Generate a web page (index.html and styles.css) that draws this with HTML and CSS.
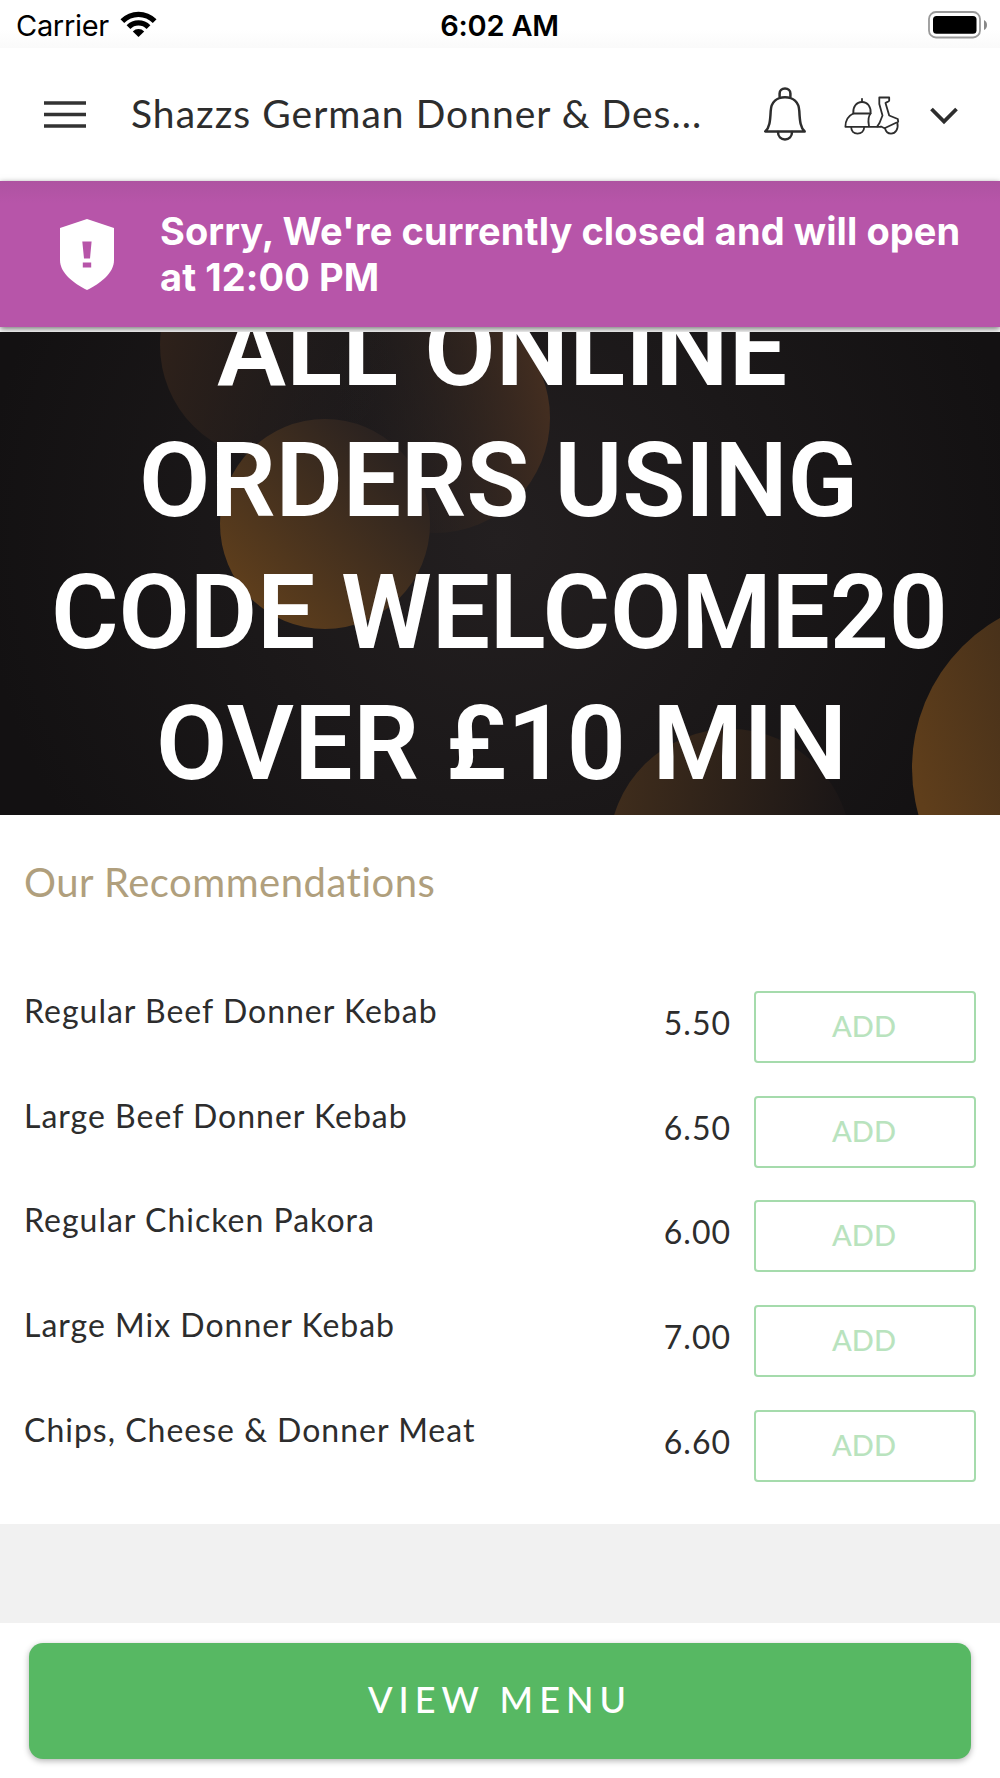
FILE: index.html
```html
<!DOCTYPE html>
<html lang="en">
<head>
  <meta charset="UTF-8">
  <title>Shazzs German Donner &amp; Desserts</title>
  <link rel="stylesheet" href="styles.css">
</head>
<body>
  <div class="status-bar">
    <div class="carrier">
      <span class="carrier-name">Carrier</span>
      <svg width="38" height="28" viewBox="0 0 38 28">
        <path d="M0.5 9.2 A25.5 25.5 0 0 1 36.5 9.2 L32.8 13 A20 20 0 0 0 4.2 13 Z"/>
        <path d="M6.6 15.2 A16.8 16.8 0 0 1 30.4 15.2 L26.6 19 A11.4 11.4 0 0 0 10.4 19 Z"/>
        <path d="M12.8 21.4 A8.2 8.2 0 0 1 24.2 21.4 L18.5 27 Z"/>
      </svg>
    </div>
    <span class="time">6:02 AM</span>
    <svg class="battery" width="59" height="28" viewBox="0 0 59 28">
      <rect x="1" y="1" width="51" height="25.5" rx="7" fill="none" stroke="#999" stroke-width="1.8"/>
      <rect x="5" y="5" width="43.5" height="17.8" rx="3.5"/>
      <path d="M56 9 Q59 10.5 59 14 Q59 17.5 56 19 Z" fill="#888"/>
    </svg>
  </div>

  <header class="header">
    <svg class="menu-icon" width="44" height="28" viewBox="0 0 44 28">
      <path d="M1 2h42M1 13.5h42M1 25h42" stroke="#333" stroke-width="3.4"/>
    </svg>
    <h1 class="title">Shazzs German Donner &amp; Des...</h1>
    <svg class="bell-icon" width="42" height="54" viewBox="0 0 42 54" fill="none" stroke="#2d2d2d" stroke-width="2.5" stroke-linecap="round" stroke-linejoin="round">
      <path d="M15.6 9.5V6.5C15.6 3.5 17.8 1.6 21 1.6S26.4 3.5 26.4 6.5V9.5"/>
      <path d="M1.3 44.5H40.7C36.5 40.5 35.8 34.5 35.3 24C34.8 15 29 10.3 21 10.3S7.2 15 6.7 24C6.2 34.5 5.5 40.5 1.3 44.5Z"/>
      <path d="M14 45C14 49.5 17 52.4 21 52.4S28 49.5 28 45"/>
    </svg>
    <svg class="scooter-icon" width="56" height="40" viewBox="0 0 56 40" fill="none" stroke="#2d2d2d" stroke-width="1.8" stroke-linecap="round" stroke-linejoin="round">
      <path d="M18 6V2.8"/>
      <path d="M9.3 17.5C8.8 11 12.3 6 18 6S27.2 11 26.6 17.5Z"/>
      <path d="M9.3 17.5C4.5 19.7 1.4 24 1.4 30.8H36.5"/>
      <path d="M26.6 17.5C23.2 21.5 24.3 26 25 30"/>
      <path d="M7.2 31C7.2 35 9.7 37.6 13.5 37.6S20.2 35 20.2 31"/>
      <path d="M33.2 30.5L35.5 27L38.5 19.5L35.3 8V1.5H45.2V4.5C45.2 6 42.5 5.5 41.5 7L45.2 19.5L53.8 23L54.2 25.8L40.5 32.3L37 30.5"/>
      <path d="M41 32.3C41.8 35.8 44 37.6 47 37.6C51.5 37.6 54.8 33 53.3 26.8"/>
    </svg>
    <svg class="chevron-icon" width="28" height="18" viewBox="0 0 28 18">
      <path d="M1.5 2L14 14.5L26.5 2" fill="none" stroke="#2d2d2d" stroke-width="3.8"/>
    </svg>
  </header>

  <div class="notice">
    <svg class="shield-icon" width="54" height="71" viewBox="0 0 54 71">
      <path d="M27 0L54 9V41C54 54 41 64 27 71C13 64 0 54 0 41V9Z" fill="#fff"/>
      <path d="M22.3 22.5H31.6L30 39.5H24ZM22.8 43.5H31.2V48.5H22.8Z" fill="#b755a9"/>
    </svg>
    <p class="notice-text">Sorry, We're currently closed and will open<br>at 12:00 PM</p>
  </div>

  <svg class="promo" width="1000" height="483" viewBox="0 332 1000 483">
    <defs>
      <radialGradient id="bg" gradientUnits="userSpaceOnUse" cx="500" cy="540" r="520">
        <stop offset="0" stop-color="#231f20"/>
        <stop offset="1" stop-color="#131112"/>
      </radialGradient>
      <linearGradient id="left" x1="0" y1="0.5" x2="1" y2="0.7">
        <stop offset="0" stop-color="#2e211a"/>
        <stop offset="1" stop-color="#231f20" stop-opacity="0"/>
      </linearGradient>
      <linearGradient id="middle" x1="0" y1="0.6" x2="1" y2="0.4">
        <stop offset="0.1" stop-color="#231f20" stop-opacity="0"/>
        <stop offset="1" stop-color="#442e20"/>
      </linearGradient>
      <linearGradient id="bright" x1="0.1" y1="0.8" x2="0.8" y2="0.1">
        <stop offset="0" stop-color="#5e3e1c"/>
        <stop offset="1" stop-color="#2a2220"/>
      </linearGradient>
      <linearGradient id="right" x1="0" y1="0.5" x2="1" y2="0.2">
        <stop offset="0" stop-color="#5f3e1b"/>
        <stop offset="0.8" stop-color="#2b2119"/>
      </linearGradient>
      <linearGradient id="bottom" x1="0" y1="0.3" x2="1" y2="0.4">
        <stop offset="0" stop-color="#402d1c"/>
        <stop offset="1" stop-color="#191516"/>
      </linearGradient>
    </defs>
    <rect y="332" width="1000" height="483" fill="url(#bg)"/>
    <circle cx="275" cy="345" r="115" fill="url(#left)"/>
    <circle cx="435" cy="418" r="115" fill="url(#middle)"/>
    <circle cx="325" cy="524" r="105" fill="url(#bright)"/>
    <circle cx="1084" cy="768" r="172" fill="url(#right)"/>
    <circle cx="730" cy="850" r="121" fill="url(#bottom)"/>
    <g class="promo-text">
      <text x="217" y="385" textLength="570">ALL ONLINE</text>
      <text x="139" y="516" textLength="719">ORDERS USING</text>
      <text x="51" y="647.5" textLength="897">CODE WELCOME20</text>
      <text x="156" y="779" textLength="691">OVER £10 MIN</text>
    </g>
  </svg>

  <section class="recommendations">
    <h2 class="section-title">Our Recommendations</h2>
    <div class="item">
      <span class="name">Regular Beef Donner Kebab</span>
      <span class="price">5.50</span>
      <button class="add">ADD</button>
    </div>
    <div class="item">
      <span class="name">Large Beef Donner Kebab</span>
      <span class="price">6.50</span>
      <button class="add">ADD</button>
    </div>
    <div class="item">
      <span class="name">Regular Chicken Pakora</span>
      <span class="price">6.00</span>
      <button class="add">ADD</button>
    </div>
    <div class="item">
      <span class="name">Large Mix Donner Kebab</span>
      <span class="price">7.00</span>
      <button class="add">ADD</button>
    </div>
    <div class="item">
      <span class="name">Chips, Cheese &amp; Donner Meat</span>
      <span class="price">6.60</span>
      <button class="add">ADD</button>
    </div>
  </section>

  <div class="spacer"></div>

  <footer class="footer">
    <button class="view-menu">VIEW MENU</button>
  </footer>
</body>
</html>
```
FILE: styles.css
```css
* {
  box-sizing: border-box;
}

body {
  margin: 0;
  width: 1000px;
  height: 1778px;
  display: flex;
  flex-direction: column;
  background: #fff;
  color: #2d2d2d;
  font-family: Lato, sans-serif;
  font-variant-ligatures: none;
  overflow: hidden;
}

svg {
  display: block;
  flex-shrink: 0;
}

/* status bar */
.status-bar {
  display: grid;
  grid-template-columns: 1fr auto 1fr;
  align-items: start;
  height: 48px;
  padding: 10px 13px 0 16px;
  background: linear-gradient(#fff 30px, #fafafa);
  color: #000;
  font-family: Inter, sans-serif;
  font-size: 29px;
  line-height: 31px;
}

.carrier {
  display: flex;
  gap: 11px;
}

.carrier-name {
  letter-spacing: -0.3px;
}

.time {
  margin-right: 4px;
  font-weight: 600;
  letter-spacing: -0.2px;
}

.battery {
  justify-self: end;
  margin-top: 1px;
}

/* header */
.header {
  display: flex;
  align-items: center;
  height: 133px;
  padding: 0 42px 0 43px;
  background: #fff;
}

.title {
  flex: 1;
  margin: -4px 0 0 44px;
  font-size: 39px;
  font-weight: 400;
  line-height: 46px;
  letter-spacing: 1.02px;
  white-space: nowrap;
}

.bell-icon {
  margin-top: -2px;
}

.scooter-icon {
  margin: 2px 0 0 38px;
}

.chevron-icon {
  margin: 2px 0 0 30px;
}

/* closed notice */
.notice {
  display: flex;
  height: 146px;
  padding: 0 0 0 60px;
  background: linear-gradient(#ae53a1, #b755a9 22px);
  box-shadow: 0 2px 6px rgba(0, 0, 0, 0.55);
  margin-bottom: 5px;
  color: #fff;
}

.shield-icon {
  margin-top: 38px;
}

.notice-text {
  margin: 27px 0 0 46px;
  font-family: Inter, sans-serif;
  font-size: 38px;
  font-weight: 700;
  line-height: 46px;
  letter-spacing: 0.08px;
  white-space: nowrap;
}

/* promo picture */
.promo {
  position: relative;
}

.promo-text {
  fill: #fff;
  font-family: Roboto, sans-serif;
  font-size: 103.5px;
  font-weight: 600;
}

/* recommendations */
.recommendations {
  height: 709px;
  padding: 42px 24px 0 24px;
}

.section-title {
  margin: 0 0 84px;
  color: #b09f7d;
  font-size: 40px;
  font-weight: 400;
  line-height: 50px;
  letter-spacing: 0.5px;
}

.item {
  display: flex;
  align-items: flex-start;
  height: 104.7px;
}

.name {
  flex: 1;
  font-size: 32px;
  line-height: 40px;
  letter-spacing: 1px;
}

.price {
  margin: 12px 23px 0 0;
  font-size: 32px;
  line-height: 40px;
  letter-spacing: 1px;
}

.add {
  width: 222px;
  height: 72px;
  padding: 0 2px 3px 0;
  border: 2px solid #a5dbac;
  border-radius: 4px;
  background: #fff;
  color: #b9e3be;
  font-family: Lato, sans-serif;
  font-size: 29px;
  font-weight: 500;
}

.spacer {
  height: 99px;
  background: #f1f1f1;
}

/* bottom bar */
.footer {
  height: 155px;
  padding: 20px 29px 0;
}

.view-menu {
  width: 100%;
  height: 116px;
  padding: 0 0 4px;
  border: 0;
  border-radius: 14px;
  background: #57b863;
  box-shadow: 0 2px 6px rgba(0, 0, 0, 0.3);
  color: #fff;
  font-family: Lato, sans-serif;
  font-size: 36px;
  font-weight: 500;
  letter-spacing: 6px;
}
```
